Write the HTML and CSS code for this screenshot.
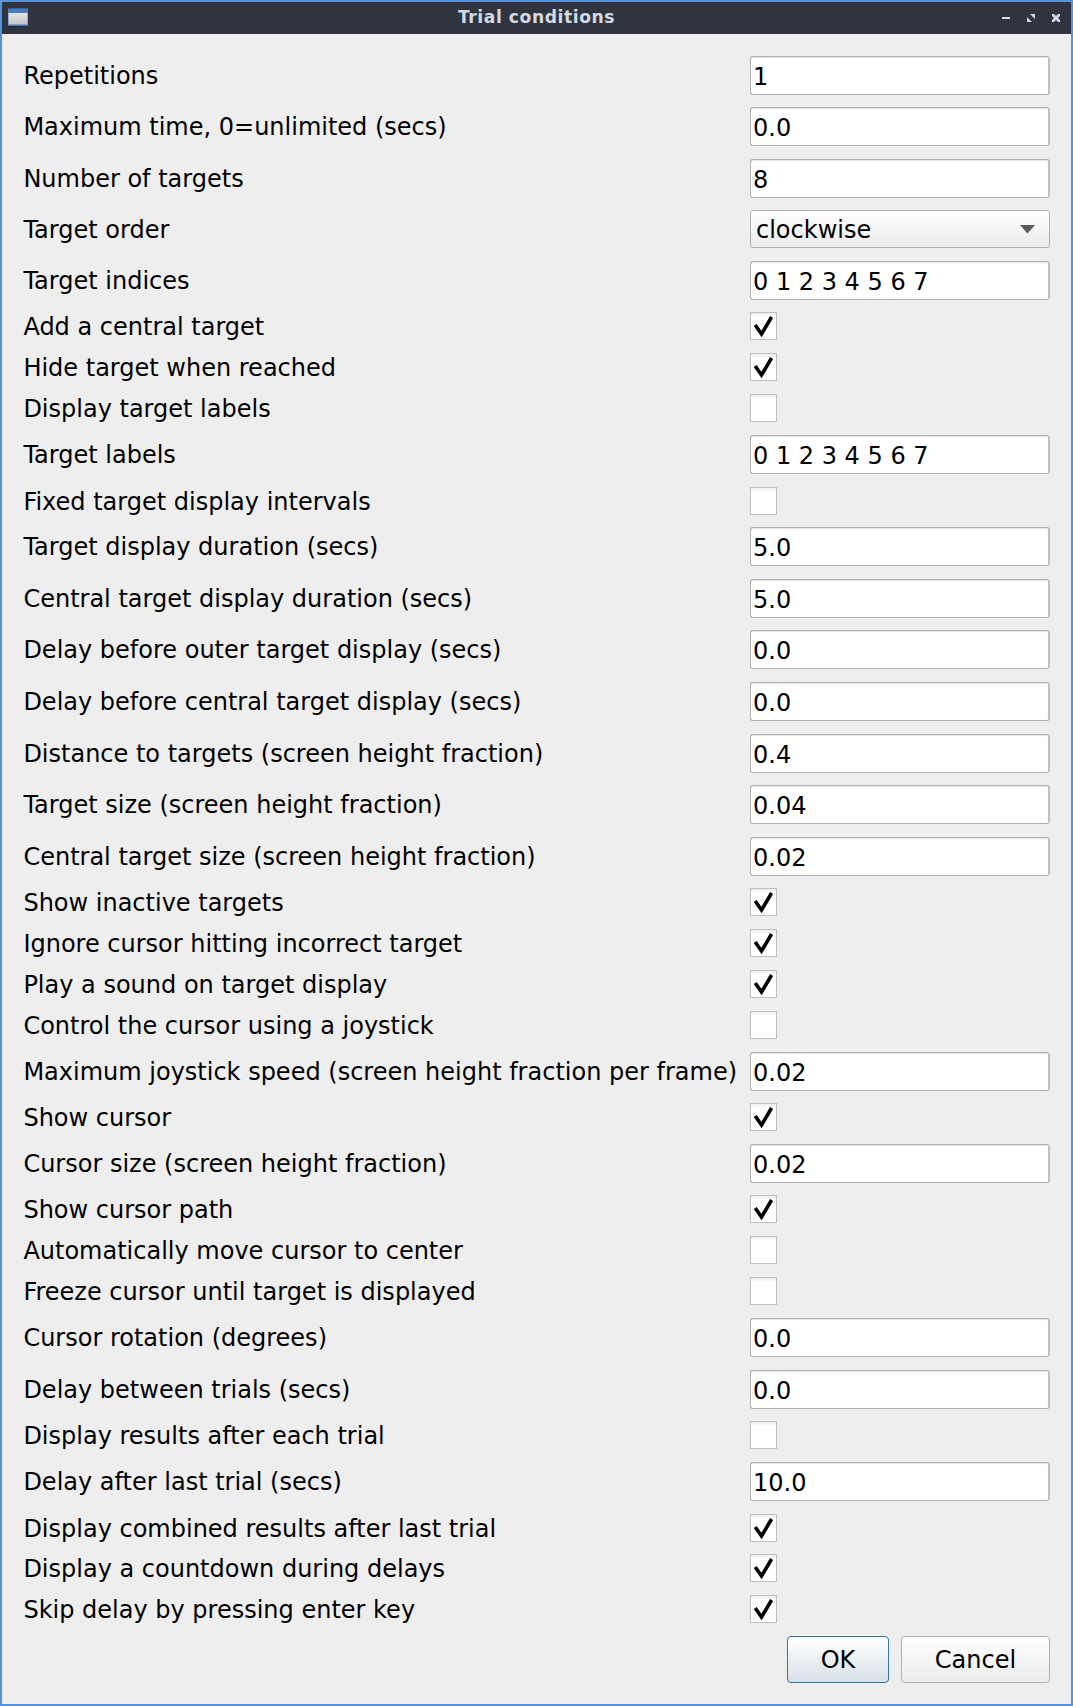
FILE: index.html
```
<!DOCTYPE html>
<html lang="en">
<head>
<meta charset="utf-8">
<title>Trial conditions</title>
<link rel="stylesheet" href="styles.css">
</head>
<body>
<div class="window">
<header class="titlebar">
<svg class="app-icon" width="20" height="19" viewBox="0 0 20 19"><defs><linearGradient id="g" x1="0" y1="0" x2="0" y2="1"><stop offset="0" stop-color="#e6e6e6"/><stop offset="1" stop-color="#c4c4c4"/></linearGradient></defs><rect width="20" height="18" fill="#4a7dc0"/><rect width="20" height="1" fill="#2f5f9f"/><rect x="0.5" y="5" width="19" height="11.500" fill="url(#g)"/><rect y="18" width="20" height="1" fill="#1f2a3a"/></svg>
<h1 class="title">Trial conditions</h1>
<svg class="controls" width="60" height="10" viewBox="0 0 60 10" fill="#d3dae3"><rect x="1" y="4" width="8" height="2"/><path d="M29 1h5v5zM26 4v5h5z"/><path d="M51 1h2l2 2 2-2h2v2l-2 2 2 2v2h-2l-2-2-2 2h-2v-2l2-2-2-2z"/></svg>
</header>
<main class="form" id="form"></main>
<footer class="buttons"><button class="button primary">OK</button><button class="button cancel">Cancel</button></footer>
</div>
<script src="form.js"></script>
</body>
</html>
```
FILE: styles.css
```
* { box-sizing: border-box; }
body { margin: 0; font-family: "DejaVu Sans", sans-serif; color: #000; }
.window { width: 1073px; height: 1706px; border: 2px solid #5294e2; background: #eee; overflow: hidden; }
.titlebar { height: 32px; background: #2f343f; display: grid; grid-template-columns: 80px 1fr 80px; align-items: center; padding: 0 10px 0 6px; }
.title { margin: 0; font-size: 17.2px; letter-spacing: 0.54px; line-height: 30px; font-weight: bold; text-align: center; color: #d3dae3; padding: 0 0 2px 4px; }
.app-icon { margin-bottom: 1px; }
.controls { justify-self: end; }
.form { padding: 21.65px 22px 0 21.4px; }
.row { display: grid; grid-template-columns: 726.6px 300px; height: 51.55px; align-items: start; }
.row.combo { height: 50.6px; }
.row.check { height: 40.85px; }
.label { font-size: 24px; line-height: 41.4px; white-space: nowrap; }
.check .label { line-height: 31px; }
.field { height: 39px; border: 1px solid #b0b0b0; border-right: 2px solid #c0c0c0; border-radius: 3px; background: #fff; box-shadow: inset 0 1px 1px #e4e4e4; font-size: 24px; line-height: 40px; padding-left: 2px; }
.select { height: 38px; border: 1px solid #b0b0b0; border-radius: 3px; background: linear-gradient(#fff, #ebebeb); font-size: 24px; line-height: 36px; padding: 0 14px 0 5px; display: flex; align-items: center; justify-content: space-between; }
.select span { padding-top: 2px; }
.box { width: 27px; height: 28px; border: 1px solid #c0c0c0; background: linear-gradient(#ececec, #fff 4px); }
.box svg { display: block; }
.buttons { display: flex; justify-content: flex-end; gap: 12px; padding-right: 21px; }
.button { height: 47px; border: 1px solid #b0b0b0; border-radius: 4px; background: linear-gradient(#fff, #ebebeb); font: 24px/44px "DejaVu Sans", sans-serif; color: #000; padding: 1px 0 0; }
.primary { width: 102px; border-color: #2b76a3; background: linear-gradient(#fff, #d8e0e8); }
.cancel { width: 149px; }
```
FILE: form.js
```
const rows = [
  ["Repetitions", "1"],
  ["Maximum time, 0=unlimited (secs)", "0.0"],
  ["Number of targets", "8"],
  ["Target order", "clockwise", "combo"],
  ["Target indices", "0 1 2 3 4 5 6 7"],
  ["Add a central target", true],
  ["Hide target when reached", true],
  ["Display target labels", false],
  ["Target labels", "0 1 2 3 4 5 6 7"],
  ["Fixed target display intervals", false],
  ["Target display duration (secs)", "5.0"],
  ["Central target display duration (secs)", "5.0"],
  ["Delay before outer target display (secs)", "0.0"],
  ["Delay before central target display (secs)", "0.0"],
  ["Distance to targets (screen height fraction)", "0.4"],
  ["Target size (screen height fraction)", "0.04"],
  ["Central target size (screen height fraction)", "0.02"],
  ["Show inactive targets", true],
  ["Ignore cursor hitting incorrect target", true],
  ["Play a sound on target display", true],
  ["Control the cursor using a joystick", false],
  ["Maximum joystick speed (screen height fraction per frame)", "0.02"],
  ["Show cursor", true],
  ["Cursor size (screen height fraction)", "0.02"],
  ["Show cursor path", true],
  ["Automatically move cursor to center", false],
  ["Freeze cursor until target is displayed", false],
  ["Cursor rotation (degrees)", "0.0"],
  ["Delay between trials (secs)", "0.0"],
  ["Display results after each trial", false],
  ["Delay after last trial (secs)", "10.0"],
  ["Display combined results after last trial", true],
  ["Display a countdown during delays", true],
  ["Skip delay by pressing enter key", true]
];
const tick = '<svg width="25" height="26" viewBox="0 0 25 26"><path d="M4.200 12L10.500 21L20.600 4" fill="none" stroke="#000" stroke-width="3.600"/></svg>';
const arrow = '<svg width="15" height="9" viewBox="0 0 15 9"><path d="M0 0h15l-7.500 8.500z" fill="#5a5a5a"/></svg>';
document.getElementById("form").innerHTML = rows.map(([label, value, kind]) => {
  const check = typeof value === "boolean";
  const control = check ? `<div class="box">${value ? tick : ""}</div>`
    : kind ? `<div class="select"><span>${value}</span>${arrow}</div>`
    : `<div class="field">${value}</div>`;
  return `<div class="row ${check ? "check" : kind || "text"}"><div class="label">${label}</div>${control}</div>`;
}).join("");
```
